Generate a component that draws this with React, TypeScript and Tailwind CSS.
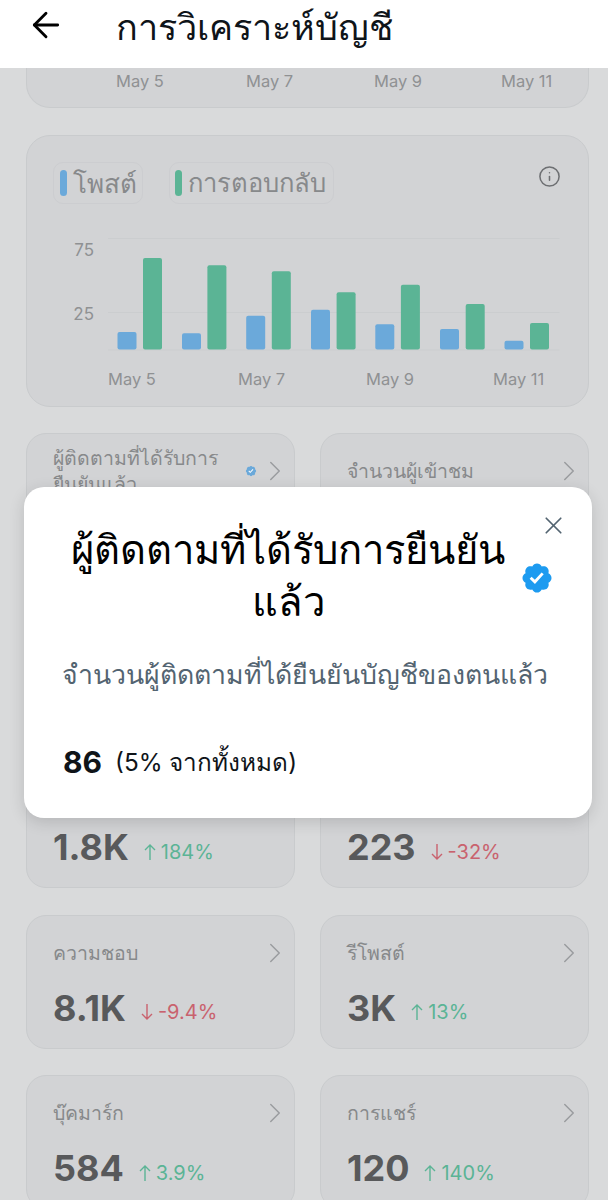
import { ArrowLeft, ChevronRight, Info, X } from "lucide-react";

const FONT = "font-['Inter','Noto_Sans','DejaVu_Sans',sans-serif]";
const BADGE =
  "M22.25 12c0-1.43-.88-2.67-2.19-3.34.46-1.39.2-2.9-.81-3.91s-2.52-1.27-3.91-.81c-.66-1.31-1.91-2.19-3.34-2.19s-2.67.88-3.33 2.19c-1.4-.46-2.91-.2-3.92.81s-1.26 2.52-.8 3.91c-1.31.67-2.2 1.91-2.2 3.34s.89 2.67 2.2 3.34c-.46 1.39-.21 2.9.8 3.91s2.52 1.26 3.91.81c.67 1.31 1.91 2.19 3.34 2.19s2.68-.88 3.34-2.19c1.39.45 2.9.2 3.91-.81s1.27-2.52.81-3.91c1.31-.67 2.19-1.91 2.19-3.34zm-11.71 4.2L6.8 12.46l1.41-1.42 2.26 2.26 4.8-5.23 1.47 1.36-6.2 6.77z";

function Badge({ size, color, className }: { size: number; color: string; className?: string }) {
  return (
    <svg width={size} height={size} viewBox="0 0 24 24" className={className}>
      <circle cx="12" cy="12" r="7" fill="#fff" />
      <path d={BADGE} fill={color} />
    </svg>
  );
}

function Trend({ up }: { up: boolean }) {
  return (
    <svg width="12" height="16" viewBox="0 0 12 16" fill="none" stroke="currentColor" strokeWidth="1.4" className="shrink-0">
      {up ? <path d="M6 16V1M1 6l5-5 5 5" /> : <path d="M6 0v15M1 10l5 5 5-5" />}
    </svg>
  );
}

const blueBars = [
  [117.5, 332],
  [182, 333.3],
  [246.2, 315.7],
  [311, 309.7],
  [375.3, 324.3],
  [440, 329],
  [504.5, 340.7],
];
const greenBars = [
  [143, 258],
  [207.4, 265.3],
  [271.8, 271.3],
  [336.6, 292.3],
  [400.9, 284.7],
  [465.7, 304],
  [530, 323],
];

function DateAxis({ className }: { className: string }) {
  return (
    <div className={`flex text-[16.5px] leading-[22px] text-[#8f9193] ${className}`}>
      <span className="w-[130px]">May 5</span>
      <span className="w-[128px]">May 7</span>
      <span className="w-[127px]">May 9</span>
      <span>May 11</span>
    </div>
  );
}

type Stat = {
  label?: string;
  value?: string;
  delta?: string;
  up?: boolean;
  badge?: boolean;
};

const stats: Stat[] = [
  { label: "ผู้ติดตามที่ได้รับการยืนยันแล้ว", badge: true },
  { label: "จำนวนผู้เข้าชม" },
  {},
  {},
  { value: "1.8K", delta: "184%", up: true },
  { value: "223", delta: "-32%", up: false },
  { label: "ความชอบ", value: "8.1K", delta: "-9.4%", up: false },
  { label: "รีโพสต์", value: "3K", delta: "13%", up: true },
  { label: "บุ๊คมาร์ก", value: "584", delta: "3.9%", up: true },
  { label: "การแชร์", value: "120", delta: "140%", up: true },
];

function StatCard({ s }: { s: Stat }) {
  return (
    <div className="h-[134px] rounded-[20px] border border-[#c9cbcd] bg-[#d2d3d5] pl-[26px] pr-[2px] pt-[23px]">
      <div className="flex h-[28px] items-center">
        <div className={`text-[19.5px] leading-[26px] text-[#87898b] ${s.badge ? "w-[172px]" : "flex-1"}`}>{s.label}</div>
        {s.badge && <Badge size={12} color="#6ba9da" className="ml-[20px]" />}
        {s.label && <ChevronRight size={34} strokeWidth={1.05} className="ml-auto text-[#9a9c9f]" />}
      </div>
      {s.value && (
        <div className="mt-[21px] flex h-[40px] items-center">
          <span className="text-[36px] font-bold leading-[40px] text-[#58595b]">{s.value}</span>
          <span className={`ml-[15px] mt-[9px] flex items-center gap-[5px] text-[20px] ${s.up ? "text-[#5bb495]" : "text-[#c9626e]"}`}>
            <Trend up={!!s.up} />
            {s.delta}
          </span>
        </div>
      )}
    </div>
  );
}

export default function App() {
  return (
    <div className={`relative h-[1200px] w-[608px] overflow-hidden bg-[#d9dadb] ${FONT}`}>
      <header className="flex h-[68px] items-center bg-white pl-[26px]">
        <ArrowLeft size={40} strokeWidth={1.7} className="mb-[19px] text-black" />
        <h1 className="mb-[14px] ml-[50px] text-[36px] font-normal leading-[48px] text-[#0f1419]">การวิเคราะห์บัญชี</h1>
      </header>

      <main className="flex flex-col gap-[27px] pl-[26px] pr-[19px]">
        <section className="h-[40px] rounded-b-[24px] border border-t-0 border-[#c9cbcd] bg-[#d2d3d5] pt-[2px]">
          <DateAxis className="pl-[89px]" />
        </section>

        <section className="h-[272px] rounded-[24px] border border-[#c9cbcd] bg-[#d2d3d5] pl-[26px] pr-[27px] pt-[26px]">
          <div className="flex items-start">
            <div className="flex h-[42px] w-[90px] items-center rounded-[10px] border border-[#cccdd0] pl-[6px] text-[26px] text-[#87898b]">
              <span className="mr-[6px] h-[26px] w-[7px] rounded-full bg-[#6ba9da]" />
              โพสต์
            </div>
            <div className="ml-[26px] flex h-[42px] w-[165px] items-center rounded-[10px] border border-[#cccdd0] pl-[5px] text-[25.6px] text-[#87898b]">
              <span className="mr-[6px] h-[26px] w-[7px] rounded-full bg-[#5bb495]" />
              การตอบกลับ
            </div>
            <Info size={23} strokeWidth={1.6} className="ml-auto mt-[3px] text-[#6d6f72]" />
          </div>
          <svg width={561} height={125} viewBox="27 230 561 125" className="-ml-[26px] mt-[26px] block">
            {[238.5, 312.5, 350].map((y) => (
              <line key={y} x1="108" x2="559.5" y1={y} y2={y} stroke="#cbcdcf" strokeWidth="1" />
            ))}
            <text x="94" y="256" textAnchor="end" fontSize="17" fill="#8f9193">75</text>
            <text x="94" y="319.5" textAnchor="end" fontSize="17" fill="#8f9193">25</text>
            {blueBars.map(([x, y]) => (
              <rect key={x} x={x} y={y} width="19" height={349.5 - y} rx="2" fill="#6ba9da" />
            ))}
            {greenBars.map(([x, y]) => (
              <rect key={x} x={x} y={y} width="19" height={349.5 - y} rx="2" fill="#5bb495" />
            ))}
          </svg>
          <DateAxis className="-ml-[26px] mt-[13px] pl-[81px]" />
        </section>

        <section className="-mt-[1px] grid grid-cols-2 gap-x-[25px] gap-y-[26.5px]">
          {stats.map((s, i) => (
            <StatCard key={i} s={s} />
          ))}
        </section>
      </main>

      <div className="absolute left-[24px] top-[487px] h-[331px] w-[568px] rounded-[20px] bg-white shadow-[0_4px_16px_rgba(0,0,0,0.14)]">
        <X size={29} strokeWidth={1.4} className="absolute right-[24px] top-[24px] text-[#536471]" />
        <div className="flex items-center pl-[38px] pt-[37px]">
          <h2 className="w-[452px] text-center text-[40px] font-normal leading-[52px] text-black">ผู้ติดตามที่ได้รับการยืนยันแล้ว</h2>
          <Badge size={34} color="#1d9bf0" className="ml-[6px] mt-[4px]" />
        </div>
        <p className="mt-[28px] pl-[38px] text-[26.7px] leading-[36px] text-[#536471]">จำนวนผู้ติดตามที่ได้ยืนยันบัญชีของตนแล้ว</p>
        <div className="mt-[50px] flex items-center pl-[39px] text-[#0f1419]">
          <span className="text-[30px] font-bold leading-[40px]">86</span>
          <span className="ml-[13px] text-[24.3px] leading-[40px]">(5% จากทั้งหมด)</span>
        </div>
      </div>
    </div>
  );
}
